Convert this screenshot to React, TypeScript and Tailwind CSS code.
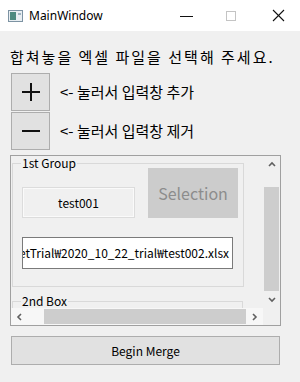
import React from "react";

const KR = { fontFamily: '"Noto Sans CJK KR", "Noto Sans", sans-serif' };

function Chevron({ dir }: { dir: "up" | "down" | "left" | "right" }) {
  const pts = {
    up: "1,5 4,2 7,5",
    down: "1,2 4,5 7,2",
    left: "5,1 2,4 5,7",
    right: "2,1 5,4 2,7",
  }[dir];
  return (
    <svg width="8" height="8" viewBox="0 0 8 8">
      <polyline points={pts} fill="none" stroke="#606060" strokeWidth="1.6" />
    </svg>
  );
}

function TitleBar() {
  return (
    <div className="h-[31px] bg-white flex items-center">
      <svg width="15" height="12" viewBox="0 0 15 12" className="ml-[8px]">
        <rect x="0.5" y="0.5" width="14" height="11" fill="#e8eef2" stroke="#7d93a3" />
        <rect x="2" y="2" width="6" height="8" fill="#4d8a80" />
        <rect x="10" y="3" width="3" height="2" fill="#9fb3c0" />
      </svg>
      <span className="ml-[6px] text-[12px] text-black" style={{ fontFamily: '"Noto Sans", sans-serif' }}>
        MainWindow
      </span>
      <div className="ml-auto flex items-center">
        <svg width="13" height="13" viewBox="0 0 13 13">
          <line x1="0" y1="7.5" x2="13" y2="7.5" stroke="#111" strokeWidth="1" />
        </svg>
        <svg width="10" height="10" viewBox="0 0 10 10" className="ml-[33px]">
          <rect x="0.5" y="0.5" width="9" height="9" fill="none" stroke="#c4c4c4" />
        </svg>
        <svg width="13" height="13" viewBox="0 0 13 13" className="ml-[36px] mr-[15px]">
          <line x1="1" y1="1" x2="12" y2="12" stroke="#111" strokeWidth="1.1" />
          <line x1="12" y1="1" x2="1" y2="12" stroke="#111" strokeWidth="1.1" />
        </svg>
      </div>
    </div>
  );
}

function SquareButton({ plus, label }: { plus?: boolean; label: string }) {
  return (
    <div className="flex items-center">
      <div className="w-[39px] h-[38px] bg-[#e1e1e1] border border-[#adadad] flex items-center justify-center">
        <svg width="20" height="20" viewBox="0 0 20 20">
          <line x1="1" y1="10" x2="19" y2="10" stroke="#111" strokeWidth="2" />
          {plus && <line x1="10" y1="1" x2="10" y2="19" stroke="#111" strokeWidth="2" />}
        </svg>
      </div>
      <span className="ml-[10px] text-[15px] text-black" style={KR}>
        {label}
      </span>
    </div>
  );
}

function GroupBox({ title, children }: { title: string; children?: React.ReactNode }) {
  return (
    <fieldset className="w-[231px] border border-[#d9d9d9] pl-[9px] pr-[5px]">
      <legend className="-ml-[1px] px-[1px] whitespace-nowrap text-[12px] leading-[14px] text-black" style={KR}>
        {title}
      </legend>
      {children}
    </fieldset>
  );
}

export default function App() {
  return (
    <div className="w-[300px] h-[382px] bg-[#f0f0f0] overflow-hidden" style={KR}>
      <TitleBar />
      <div className="pl-[10px] mt-[16px] h-[20px] leading-[20px] text-[15px] tracking-[2px] whitespace-nowrap text-black">
        합쳐놓을 엑셀 파일을 선택해 주세요.
      </div>
      <div className="pl-[11px] mt-[6px] flex flex-col gap-[1px]">
        <SquareButton plus label="<- 눌러서 입력창 추가" />
        <SquareButton label="<- 눌러서 입력창 제거" />
      </div>

      <div className="ml-[10px] mt-[5px] w-[271px] h-[171px] border border-[#a0a0a0] flex flex-col">
        <div className="flex h-[152px]">
          <div className="w-[252px] h-[152px] overflow-hidden pl-[1px]">
            <GroupBox title="1st Group">
              <div className="flex items-end gap-[13px] -mt-[2px]">
                <div className="w-[113px] h-[31px] border border-[#dcdcdc] shadow-[inset_0_0_0_1px_#fafafa] flex items-center justify-center text-[12px] text-black">
                  test001
                </div>
                <div className="w-[90px] h-[50px] bg-[#cccccc] flex items-center justify-center text-[16px] text-[#8c8c8c]">
                  Selection
                </div>
              </div>
              <div className="mt-[19px] mb-[17px] w-[211px] h-[32px] bg-white border border-[#7a7a7a] overflow-hidden flex justify-end items-center pr-[3px]">
                <span className="whitespace-nowrap text-[12px] text-black">
                  D:₩Python₩SheetTrial₩2020_10_22_trial₩test002.xlsx
                </span>
              </div>
            </GroupBox>
            <div className="mt-[7px]">
              <GroupBox title="2nd Box">
                <div className="h-[40px]" />
              </GroupBox>
            </div>
          </div>
          <div className="w-[17px] flex flex-col bg-[#f0f0f0]">
            <div className="h-[17px] flex items-center justify-center">
              <Chevron dir="up" />
            </div>
            <div className="h-[14px]" />
            <div className="h-[104px] mx-[1px] bg-[#cdcdcd]" />
            <div className="flex-1 flex items-center justify-center">
              <Chevron dir="down" />
            </div>
          </div>
        </div>
        <div className="flex h-[17px]">
          <div className="w-[252px] flex bg-[#f7f7f7]">
            <div className="w-[17px] flex items-center justify-center">
              <Chevron dir="left" />
            </div>
            <div className="w-[16px]" />
            <div className="w-[202px] my-[1px] bg-[#cdcdcd]" />
            <div className="flex-1 flex items-center justify-center">
              <Chevron dir="right" />
            </div>
          </div>
          <div className="w-[17px] bg-[#f0f0f0]" />
        </div>
      </div>

      <div className="ml-[11px] mt-[10px] w-[269px] h-[29px] bg-[#e1e1e1] border border-[#adadad] flex items-center justify-center text-[12px] text-black">
        Begin Merge
      </div>
    </div>
  );
}
